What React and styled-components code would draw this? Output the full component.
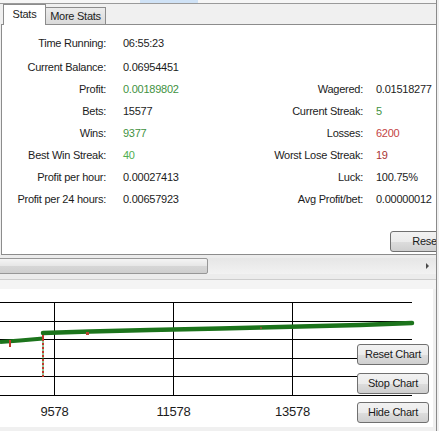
import React from 'react';
import styled, { createGlobalStyle } from 'styled-components';

const GlobalStyle = createGlobalStyle`
  html, body {
    margin: 0;
    padding: 0;
    background: #f0f0f0;
  }
  body {
    font-family: "Liberation Sans", Arial, sans-serif;
    font-size: 11px;
    letter-spacing: -0.25px;
    color: #1c1c1c;
  }
`;

const Window = styled.div`
  width: 437px;
  height: 431px;
  box-sizing: border-box;
  border-right: 1px solid #8a8a8a;
  overflow: hidden;
  display: flex;
  flex-direction: column;
`;

const TopEdge = styled.div`
  height: 3px;
  background: #f6f6f6;
  border-bottom: 1px solid #9a9a9a;
  display: flex;
  padding-left: 140px;
`;

const Glare = styled.span`
  width: 58px;
  background: #cfe2f6;
`;

const TabStrip = styled.div`
  height: 20px;
  display: flex;
  align-items: flex-end;
  padding-left: 3px;
  background: #f0f0f0;
`;

const Tab = styled.div`
  position: relative;
  box-sizing: border-box;
  border: 1px solid #8c8c8c;
  border-bottom: none;
  display: flex;
  align-items: center;
  justify-content: center;
  white-space: nowrap;
  ${(p) => (p.$active
    ? `
    width: 43px;
    height: 21px;
    margin-bottom: -1px;
    background: #fff;
    z-index: 1;
    padding-bottom: 2px;
  `
    : `
    width: 61px;
    height: 17px;
    margin-left: -1px;
    background: linear-gradient(to bottom, #ececec, #dadada);
  `)}
`;

const Panel = styled.div`
  height: 231px;
  box-sizing: border-box;
  margin-left: 1px;
  border: 1px solid #8c8c8c;
  border-right: none;
  background: #fff;
  overflow: hidden;
`;

const PanelInner = styled.div`
  width: 466px;
  height: 100%;
  box-sizing: border-box;
  padding: 7px 0 2px;
  display: flex;
  flex-direction: column;
`;

const StatsGrid = styled.div`
  display: grid;
  grid-template-columns: 104px 150px 107px 1fr;
  grid-template-rows: 24px repeat(7, 22px);
  align-items: start;
  line-height: 22px;
`;

const Label = styled.div`
  text-align: right;
  white-space: nowrap;
  grid-column: ${(p) => p.$col};
`;

const Value = styled.div`
  white-space: nowrap;
  grid-column: ${(p) => p.$col};
  padding-left: ${(p) => p.$pad}px;
  color: ${(p) => p.$color || '#1c1c1c'};
`;

const Footer = styled.div`
  margin-top: auto;
  display: flex;
  justify-content: flex-end;
  padding-right: 6px;
`;

const WinButton = styled.button`
  width: 72px;
  height: 21px;
  box-sizing: border-box;
  padding: 0 0 1px;
  border: 1px solid #707070;
  border-radius: 3px;
  background: linear-gradient(to bottom, #f2f2f2 0%, #ebebeb 50%, #dddddd 51%, #cfcfcf 100%);
  font: 11px "Liberation Sans", Arial, sans-serif;
  letter-spacing: -0.25px;
  color: #1a1a1a;
  white-space: nowrap;
`;

const ScrollRow = styled.div`
  height: 25px;
  box-sizing: border-box;
  padding-top: 3px;
  border-bottom: 1px solid #cdcdcd;
  background: #ececec;
`;

const Track = styled.div`
  height: 16px;
  display: flex;
  align-items: stretch;
  justify-content: space-between;
  background: linear-gradient(to bottom, #e6e6e6, #f2f2f2);
`;

const Thumb = styled.div`
  width: 211px;
  margin-left: -3px;
  box-sizing: border-box;
  border: 1px solid #979797;
  border-radius: 2px;
  background: linear-gradient(to bottom, #f4f4f4 0%, #e6e6e6 50%, #d6d6d6 51%, #cfcfcf 100%);
`;

const Arrow = styled.span`
  align-self: center;
  margin-right: 7px;
  width: 0;
  height: 0;
  border-top: 3px solid transparent;
  border-bottom: 3px solid transparent;
  border-left: 3px solid #4a4a4a;
`;

const ChartBar = styled.div`
  height: 9px;
  background: #f4f4f4;
`;

const ChartArea = styled.div`
  width: 433px;
  height: 138px;
  background: #fff;
  display: grid;
`;

const Plot = styled.svg`
  grid-area: 1 / 1;
  display: block;
`;

const ChartButtons = styled.div`
  grid-area: 1 / 1;
  justify-self: end;
  align-self: start;
  margin: 55px 4px 0 0;
  display: flex;
  flex-direction: column;
  gap: 8px;
`;

const left = [
  ['Time Running:', '06:55:23'],
  ['Current Balance:', '0.06954451'],
  ['Profit:', '0.00189802', '#3f923f'],
  ['Bets:', '15577'],
  ['Wins:', '9377', '#3f923f'],
  ['Best Win Streak:', '40', '#4fae4f'],
  ['Profit per hour:', '0.00027413'],
  ['Profit per 24 hours:', '0.00657923'],
];

const right = [
  null,
  null,
  ['Wagered:', '0.01518277'],
  ['Current Streak:', '5', '#3f923f'],
  ['Losses:', '6200', '#c44444'],
  ['Worst Lose Streak:', '19', '#a83434'],
  ['Luck:', '100.75%'],
  ['Avg Profit/bet:', '0.00000012'],
];

const hLines = [13.5, 32.5, 50.5, 69.5, 87.5, 106.5];
const vLines = [[54.5, '9578'], [173.5, '11578'], [292.5, '13578']];

function Chart() {
  const dots = [];
  for (let y = 50; y <= 87; y += 4) dots.push(y);
  return (
    <Plot width="433" height="138" viewBox="0 0 433 138">
      {hLines.map((y) => (
        <line key={y} x1="0" x2="412" y1={y} y2={y} stroke="#000" strokeWidth="1" />
      ))}
      {vLines.map(([x, t]) => (
        <g key={t}>
          <line x1={x} x2={x} y1="13" y2="107" stroke="#000" strokeWidth="1" />
          <text x={x} y="127" textAnchor="middle" fontFamily="Liberation Sans, Arial, sans-serif" fontSize="13" fill="#1c1c1c">{t}</text>
        </g>
      ))}
      <line x1="43" x2="43" y1="49" y2="87" stroke="#2c8a2c" strokeWidth="1" />
      {dots.map((y) => (
        <rect key={y} x="42" y={y} width="2" height="2" fill="#c0392b" />
      ))}
      <polyline points="0,53 20,51.5 43,49.5" fill="none" stroke="#1c741c" strokeWidth="4" />
      <polyline points="43,44 90,42.5 150,41 220,39.5 300,37.5 360,36 412,34" fill="none" stroke="#1c741c" strokeWidth="4.5" strokeLinecap="round" />
      <line x1="10" x2="10" y1="51" y2="58" stroke="#c0392b" strokeWidth="2" />
      <line x1="43" x2="43" y1="46" y2="52" stroke="#c0392b" strokeWidth="2" />
      <rect x="86" y="43" width="3" height="3" fill="#b8432f" />
      <rect x="260" y="38" width="2" height="2" fill="#7a5a2a" />
    </Plot>
  );
}

export default function App() {
  return (
    <>
      <GlobalStyle />
      <Window>
        <TopEdge>
          <Glare />
        </TopEdge>
        <TabStrip>
          <Tab $active>Stats</Tab>
          <Tab>More Stats</Tab>
        </TabStrip>
        <Panel>
          <PanelInner>
            <StatsGrid>
              {left.map(([l, v, c], i) => (
                <React.Fragment key={l}>
                  <Label $col={1} style={{ gridRow: i + 1 }}>{l}</Label>
                  <Value $col={2} $pad={17} $color={c} style={{ gridRow: i + 1 }}>{v}</Value>
                  {right[i] && (
                    <>
                      <Label $col={3} style={{ gridRow: i + 1 }}>{right[i][0]}</Label>
                      <Value $col={4} $pad={13} $color={right[i][2]} style={{ gridRow: i + 1 }}>{right[i][1]}</Value>
                    </>
                  )}
                </React.Fragment>
              ))}
            </StatsGrid>
            <Footer>
              <WinButton>Reset</WinButton>
            </Footer>
          </PanelInner>
        </Panel>
        <ScrollRow>
          <Track>
            <Thumb />
            <Arrow />
          </Track>
        </ScrollRow>
        <ChartBar />
        <ChartArea>
          <Chart />
          <ChartButtons>
            <WinButton>Reset Chart</WinButton>
            <WinButton>Stop Chart</WinButton>
            <WinButton>Hide Chart</WinButton>
          </ChartButtons>
        </ChartArea>
      </Window>
    </>
  );
}
